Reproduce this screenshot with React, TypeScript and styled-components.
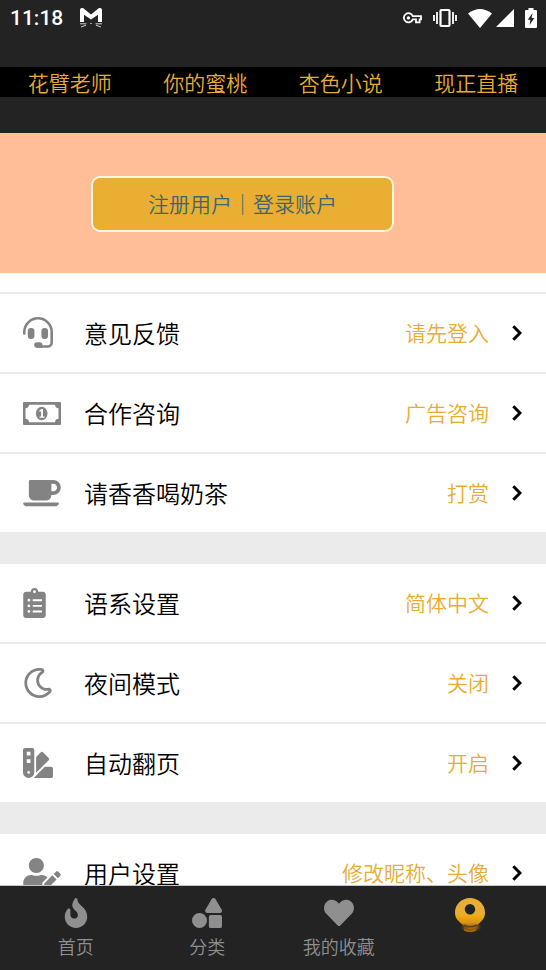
import React from "react";
import styled, { createGlobalStyle } from "styled-components";
import {
  FaClipboardList,
  FaCoffee,
  FaFire,
  FaHeart,
  FaRegMoon,
  FaShapes,
  FaSwatchbook,
  FaUserEdit,
} from "react-icons/fa";

const color = {
  dark: "#232323",
  gold: "#e8ac34",
  peach: "#ffbe98",
  icon: "#838383",
  line: "#ebebeb",
  navIcon: "#8f8f8f",
};

const GlobalStyle = createGlobalStyle`
  *, *::before, *::after { box-sizing: border-box; }
  body {
    margin: 0;
    background: #fff;
    font-family: "Noto Sans CJK SC DemiLight", "Noto Sans CJK SC", sans-serif;
    font-weight: 350;
  }
  a { color: inherit; text-decoration: none; }
`;

const Screen = styled.div`
  display: flex;
  flex-direction: column;
  height: 100vh;
  overflow: hidden;
`;

const StatusBar = styled.header`
  flex: none;
  display: flex;
  align-items: center;
  justify-content: space-between;
  height: 36px;
  padding: 0 9px 0 10px;
  background: ${color.dark};
  color: #fff;
`;

const StatusGroup = styled.div<{ $gap: number }>`
  display: flex;
  align-items: center;
  gap: ${(p) => p.$gap}px;
  svg { display: block; }
`;

const Clock = styled.time`
  font: 500 21px/24px Roboto, sans-serif;
`;

const TopBar = styled.div`
  flex: none;
  padding: 31px 0 36px;
  background: ${color.dark};
`;

const TopLinks = styled.nav`
  display: grid;
  grid-template-columns: repeat(4, 1fr);
  padding: 0 2px;
  background: #000;
  color: ${color.gold};
  font-size: 21px;
  line-height: 30px;
  text-align: center;
`;

const Content = styled.main`
  flex: 1;
  min-height: 0;
  overflow: hidden;
`;

const Banner = styled.section`
  padding: 43px 0 41px;
  background: ${color.peach};
`;

const AccountButton = styled.button`
  display: block;
  width: 55.5%;
  height: 56px;
  margin: 0 0 0 calc(100% / 6);
  padding: 0 0 2px;
  border: 2px solid #fff6e2;
  border-radius: 9px;
  background: #eaae32;
  color: #3b6672;
  font-family: inherit;
  font-weight: inherit;
  font-size: 21px;
  line-height: 30px;
`;

const Group = styled.ul<{ $first?: boolean }>`
  margin: 0;
  padding: 0;
  list-style: none;
  ${(p) => (p.$first ? "margin-top: 19px;" : `border-top: 30px solid ${color.line};`)}
`;

const Item = styled.li`
  height: 80px;
  border-top: 2px solid ${color.line};
`;

const Row = styled.a`
  display: flex;
  align-items: center;
  height: 100%;
  padding: 0 24px 0 23px;
`;

const RowIcon = styled.span<{ $width: number }>`
  flex: none;
  width: 61px;
  color: ${color.icon};
  font-size: 30px;
  svg { display: block; width: ${(p) => p.$width}px; }
`;

const Label = styled.span`
  flex: 1;
  padding-bottom: 1px;
  color: #000;
  font-size: 24px;
  line-height: 32px;
`;

const Value = styled.span`
  margin-right: 23px;
  padding-bottom: 2px;
  color: ${color.gold};
  font-size: 21px;
  line-height: 30px;
`;

const TabBar = styled.nav`
  flex: none;
  display: grid;
  grid-template-columns: repeat(4, 1fr);
  height: 85px;
  padding: 0 10px;
  border-top: 1px solid #c6c6c6;
  background: ${color.dark};
`;

const Tab = styled.a`
  display: flex;
  flex-direction: column;
  align-items: center;
  gap: 5px;
  padding-top: 12px;
  color: ${color.navIcon};
  font-size: 18px;
  line-height: 26px;
  > svg { display: block; font-size: 30px; }
`;

const HeadsetIcon = () => (
  <svg width="30" height="32" viewBox="0 0 30 32" fill="currentColor" aria-hidden="true">
    <path
      d="M1.3 16.5V15A13.7 13.7 0 0 1 28.7 15V25.5A4 4 0 0 1 24.7 29.5H15"
      fill="none"
      stroke="currentColor"
      strokeWidth="2.6"
      strokeLinecap="round"
    />
    <rect x="4.800" y="11" width="6.600" height="11" rx="3" />
    <rect x="18.400" y="11" width="6.600" height="11" rx="3" />
    <path d="M14 25.200h2.500a3 3 0 0 1 3 3v2.600H14a2.800 2.800 0 0 1 0-5.600z" />
  </svg>
);

const BanknoteIcon = () => (
  <svg width="38" height="23" viewBox="0 0 38 23" aria-hidden="true">
    <path
      fill="currentColor"
      fillRule="evenodd"
      d="M1 0h36q1 0 1 1v21q0 1-1 1H1q-1 0-1-1V1Q0 0 1 0zM6 2.800A3.800 3.800 0 0 1 2.500 6.300v10.400A3.800 3.800 0 0 1 6 20.200h26a3.800 3.800 0 0 1 3.500-3.500V6.300A3.800 3.800 0 0 1 32 2.800z"
    />
    <ellipse cx="18.700" cy="11.500" rx="5.800" ry="6.800" fill="currentColor" />
    <path d="M16.400 8.400L18.600 7h1.400v7.400h1.600v1.400h-5v-1.400h1.500V9.300l-1.700.5z" fill="#fff" />
  </svg>
);

const Chevron = () => (
  <svg width="10" height="16" viewBox="0 0 10 16" aria-hidden="true">
    <path d="M1.300 1.300L8 8L1.300 14.700" fill="none" stroke="#000" strokeWidth="3" />
  </svg>
);

const MaskIcon = () => (
  <svg width="22" height="20" viewBox="0 0 22 20" aria-hidden="true">
    <path d="M0 14V2Q0 0 2 0h1l8 6.500L19 0h1q2 0 2 2v12h-4V6.800L11 11.500L4 6.800V14z" fill="#fff" />
    <path
      d="M0 15.800H6.500M15.500 15.800H22M1 19L6 17.200M21 19L16 17.200M10.300 15.500h1.400"
      stroke="#d0d0d0"
      strokeWidth="1"
      fill="none"
    />
  </svg>
);

const KeyIcon = () => (
  <svg width="19" height="12" viewBox="0 0 19 12" aria-hidden="true">
    <path
      d="M9.800 4.200H18V7.400H16.600V10.300H13V7.400H9.800A4.600 4.600 0 1 1 9.800 4.200z"
      fill="none"
      stroke="#fff"
      strokeWidth="1.800"
    />
    <circle cx="5.400" cy="5.900" r="1.700" fill="#fff" />
  </svg>
);

const VibrateIcon = () => (
  <svg width="24" height="20" viewBox="0 0 24 20" aria-hidden="true">
    <rect x="7.500" y="2" width="9" height="16" rx="1" fill="none" stroke="#fff" strokeWidth="2.200" />
    <path d="M4 4V16M20 4V16" stroke="#fff" strokeWidth="1.800" />
    <path d="M1 7V13M23 7V13" stroke="#fff" strokeWidth="1.800" />
  </svg>
);

const WifiIcon = () => (
  <svg width="24" height="19" viewBox="0 0 24 19" aria-hidden="true">
    <path d="M12 19L0 4.500Q12-4.500 24 4.500z" fill="#fff" />
  </svg>
);

const SignalIcon = () => (
  <svg width="18" height="18" viewBox="0 0 18 18" aria-hidden="true">
    <path d="M18 0V18H0z" fill="#fff" />
  </svg>
);

const BatteryIcon = () => (
  <svg width="12" height="20" viewBox="0 0 12 20" aria-hidden="true">
    <path
      fill="#fff"
      fillRule="evenodd"
      d="M3.500 0h5v2H11q1 0 1 1v16q0 1-1 1H1q-1 0-1-1V3q0-1 1-1h2.500zM7.500 5L2.800 11.800H5.400L4.600 17L9.300 10H6.600z"
    />
  </svg>
);

const ProfileIcon = () => (
  <svg width="34" height="36" viewBox="0 0 34 36" aria-hidden="true">
    <defs>
      <linearGradient id="gold" x1="0" y1="0" x2="0" y2="1">
        <stop offset="0.550" stopColor="#e9ad34" />
        <stop offset="0.600" stopColor="#f2ac12" />
        <stop offset="0.850" stopColor="#d99213" />
        <stop offset="1" stopColor="#8a6425" />
      </linearGradient>
      <radialGradient id="glow">
        <stop offset="0" stopColor="#c87b0c" />
        <stop offset="0.550" stopColor="#7d4d0c" />
        <stop offset="1" stopColor="#232323" stopOpacity="0" />
      </radialGradient>
    </defs>
    <ellipse cx="18" cy="29" rx="12" ry="6.500" fill="url(#glow)" />
    <path d="M17 0C25.500 0 32 6.500 32 14.500C32 21 28 23.500 24 27.500Q17 31 10.500 27.500C6 23.500 2 21 2 14.500C2 6.500 8.500 0 17 0z" fill="url(#gold)" />
    <path d="M10.500 27Q17 30.500 24 27" fill="none" stroke="#59421f" strokeWidth="1.500" />
    <path d="M11 31.500Q17 35 23 31.500" fill="none" stroke="#a8660e" strokeWidth="1.500" />
    <circle cx="17" cy="11.300" r="5.200" fill="#232323" />
  </svg>
);

type Entry = { icon: React.ReactNode; iconWidth: number; label: string; value: string };

const groups: Entry[][] = [
  [
    { icon: <HeadsetIcon />, iconWidth: 30, label: "意见反馈", value: "请先登入" },
    { icon: <BanknoteIcon />, iconWidth: 38, label: "合作咨询", value: "广告咨询" },
    { icon: <FaCoffee />, iconWidth: 38, label: "请香香喝奶茶", value: "打赏" },
  ],
  [
    { icon: <FaClipboardList />, iconWidth: 23, label: "语系设置", value: "简体中文" },
    { icon: <FaRegMoon />, iconWidth: 30, label: "夜间模式", value: "关闭" },
    { icon: <FaSwatchbook />, iconWidth: 30, label: "自动翻页", value: "开启" },
  ],
  [{ icon: <FaUserEdit />, iconWidth: 38, label: "用户设置", value: "修改昵称、头像" }],
];

const topLinks = ["花臂老师", "你的蜜桃", "杏色小说", "现正直播"];

const tabs = [
  { icon: <FaFire />, label: "首页" },
  { icon: <FaShapes />, label: "分类" },
  { icon: <FaHeart />, label: "我的收藏" },
];

export default function App() {
  return (
    <Screen>
      <GlobalStyle />
      <StatusBar>
        <StatusGroup $gap={17}>
          <Clock>11:18</Clock>
          <MaskIcon />
        </StatusGroup>
        <StatusGroup $gap={11}>
          <KeyIcon />
          <VibrateIcon />
          <StatusGroup $gap={4}>
            <WifiIcon />
            <SignalIcon />
          </StatusGroup>
          <BatteryIcon />
        </StatusGroup>
      </StatusBar>
      <TopBar>
        <TopLinks>
          {topLinks.map((text) => (
            <a href="#" key={text}>{text}</a>
          ))}
        </TopLinks>
      </TopBar>
      <Content>
        <Banner>
          <AccountButton type="button">注册用户｜登录账户</AccountButton>
        </Banner>
        {groups.map((entries, i) => (
          <Group key={i} $first={i === 0}>
            {entries.map((entry) => (
              <Item key={entry.label}>
                <Row href="#">
                  <RowIcon $width={entry.iconWidth}>{entry.icon}</RowIcon>
                  <Label>{entry.label}</Label>
                  <Value>{entry.value}</Value>
                  <Chevron />
                </Row>
              </Item>
            ))}
          </Group>
        ))}
      </Content>
      <TabBar>
        {tabs.map((tab) => (
          <Tab href="#" key={tab.label}>
            {tab.icon}
            <span>{tab.label}</span>
          </Tab>
        ))}
        <Tab href="#" aria-label="我的" aria-current="page">
          <ProfileIcon />
        </Tab>
      </TabBar>
    </Screen>
  );
}
